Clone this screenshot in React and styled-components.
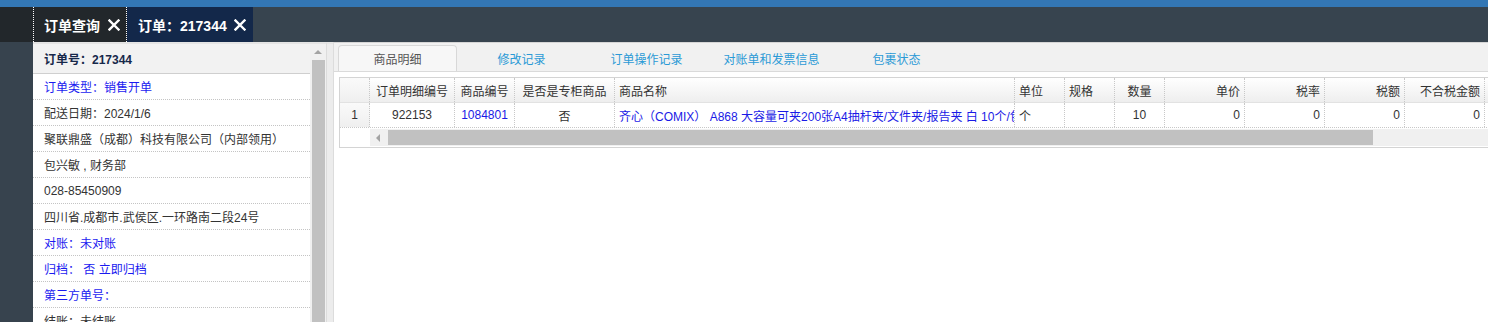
import React from 'react';
import styled, { createGlobalStyle } from 'styled-components';

const GlobalStyle = createGlobalStyle`
    html, body {
        margin: 0;
        padding: 0;
        background: #37434e;
        font-family: "Liberation Sans", "Noto Sans CJK SC", sans-serif;
        font-size: 12px;
        overflow: hidden;
    }
    * { box-sizing: border-box; }
`;

const Page = styled.div`
    width: 1488px;
    height: 322px;
    display: flex;
    flex-direction: column;
    overflow: hidden;
`;

const TopStrip = styled.div`
    height: 7px;
    background: #3377b5;
`;

const HeaderBar = styled.div`
    height: 35px;
    display: flex;
    background: #37444f;
`;

const HomeSlot = styled.div`
    width: 33px;
    background: #22272b;
`;

const PageTab = styled.div`
    display: flex;
    align-items: center;
    gap: ${(p) => p.$gap}px;
    padding: 0 ${(p) => p.$padR}px 0 ${(p) => p.$padL}px;
    background: ${(p) => (p.$active ? '#13284a' : '#22272b')};
    border-left: ${(p) => (p.$dotted ? '1px dotted #fff' : 'none')};
    border-right: ${(p) => (p.$dotted ? '1px dotted #fff' : 'none')};
    color: #fff;
    font-size: 14px;
    font-weight: bold;
`;

const CloseIcon = styled.svg`
    width: 12px;
    height: 12px;
    flex: none;
`;

const Main = styled.div`
    flex: 1;
    display: flex;
    min-height: 0;
`;

const LeftStrip = styled.div`
    width: 33px;
    background: #37434e;
`;

const InfoPanel = styled.div`
    width: 277px;
    background: #fff;
    border-top: 2px solid #e4e4e4;
    overflow: hidden;
`;

const InfoHead = styled.div`
    height: 30px;
    display: flex;
    align-items: center;
    padding-left: 11px;
    background: #f2f2f2;
    border-bottom: 1px solid #cfcfcf;
    color: #17284a;
    font-weight: bold;
`;

const InfoRow = styled.div`
    height: 26px;
    display: flex;
    align-items: center;
    padding-left: 11px;
    border-bottom: 1px dotted #c4c4c4;
    color: ${(p) => (p.$blue ? '#1a1af0' : '#333')};
    white-space: nowrap;
`;

const VScroll = styled.div`
    width: 17px;
    display: flex;
    flex-direction: column;
    align-items: center;
    background: #f0f0f0;
    border-top: 2px solid #e4e4e4;
    border-right: 1px solid #dcdcdc;
`;

const UpArrow = styled.div`
    margin-top: 6px;
    width: 0;
    height: 0;
    border-left: 4px solid transparent;
    border-right: 4px solid transparent;
    border-bottom: 4px solid #a3a3a3;
`;

const VThumb = styled.div`
    margin-top: 6px;
    width: 13px;
    flex: 1;
    background: #c1c1c1;
`;

const Gutter = styled.div`
    width: 6px;
    background: #ececec;
    border-top: 2px solid #e4e4e4;
`;

const RightPanel = styled.div`
    flex: 1;
    display: flex;
    flex-direction: column;
    background: #fff;
    border-top: 1px solid #d6d6d6;
    border-left: 1px solid #dcdcdc;
    min-width: 0;
`;

const TabBar = styled.div`
    height: 29px;
    display: flex;
    align-items: flex-end;
    padding-left: 4px;
    background: #f1f1f1;
    border-bottom: 1px solid #dadada;
`;

const DetailTab = styled.div`
    width: ${(p) => (p.$active ? 119 : 125)}px;
    margin-right: ${(p) => (p.$active ? 2 : 0)}px;
    height: 26px;
    display: flex;
    align-items: center;
    justify-content: center;
    font-size: 12px;
    color: ${(p) => (p.$active ? '#555' : '#2b9ad6')};
    background: ${(p) => (p.$active ? '#f7f7f7' : 'transparent')};
    border: ${(p) => (p.$active ? '1px solid #d8d8d8' : 'none')};
    border-bottom: none;
    border-radius: 4px 4px 0 0;
    white-space: nowrap;
`;

const Content = styled.div`
    flex: 1;
    padding: 5px 0 0 5px;
    overflow: hidden;
`;

const Grid = styled.div`
    width: 1170px;
    border: 1px solid #d4d4d4;
    border-right: none;
`;

const GridRow = styled.div`
    display: flex;
    height: 25px;
    border-bottom: ${(p) => (p.$head ? '1px solid #e2e2e2' : '1px dotted #c8c8c8')};
    background: ${(p) => (p.$head ? 'linear-gradient(#ffffff, #eeeeee)' : '#fff')};
`;

const Cell = styled.div`
    width: ${(p) => p.$w}px;
    flex: none;
    display: flex;
    align-items: center;
    justify-content: ${(p) => (p.$align === 'right' ? 'flex-end' : p.$align === 'left' ? 'flex-start' : 'center')};
    padding: 0 4px;
    border-right: 1px dotted #c8c8c8;
    color: ${(p) => (p.$blue ? '#1a1ae6' : '#333')};
    white-space: nowrap;
    overflow: hidden;
    background: ${(p) => (p.$num ? 'linear-gradient(#fafafa, #efefef)' : 'transparent')};
`;

const HScrollRow = styled.div`
    display: flex;
    height: 19px;
    padding-top: 1px;
`;

const HSpacer = styled.div`
    width: 30px;
`;

const HTrack = styled.div`
    flex: 1;
    display: flex;
    align-items: center;
    background: #f0f0f0;
    height: 17px;
`;

const LeftArrow = styled.div`
    margin-left: 6px;
    width: 0;
    height: 0;
    border-top: 4px solid transparent;
    border-bottom: 4px solid transparent;
    border-right: 4px solid #a3a3a3;
`;

const HThumb = styled.div`
    margin-left: 8px;
    width: 985px;
    height: 15px;
    background: #c1c1c1;
`;

const info = [
    { text: '订单类型：销售开单', blue: true },
    { text: '配送日期：2024/1/6' },
    { text: '聚联鼎盛（成都）科技有限公司（内部领用）' },
    { text: '包兴敏 , 财务部' },
    { text: '028-85450909' },
    { text: '四川省.成都市.武侯区.一环路南二段24号' },
    { text: '对账：未对账', blue: true },
    { text: '归档：  否 立即归档', blue: true },
    { text: '第三方单号：', blue: true },
    { text: '结账：未结账' },
];

const tabs = ['修改记录', '订单操作记录', '对账单和发票信息', '包裹状态'];

const columns = [
    { key: 'n', title: '', w: 30, num: true },
    { key: 'id', title: '订单明细编号', w: 85 },
    { key: 'code', title: '商品编号', w: 60, blue: true },
    { key: 'zg', title: '是否是专柜商品', w: 100 },
    { key: 'name', title: '商品名称', w: 400, align: 'left', blue: true },
    { key: 'unit', title: '单位', w: 50, align: 'left' },
    { key: 'spec', title: '规格', w: 50, align: 'left' },
    { key: 'qty', title: '数量', w: 50 },
    { key: 'price', title: '单价', w: 80, align: 'right' },
    { key: 'rate', title: '税率', w: 80, align: 'right' },
    { key: 'tax', title: '税额', w: 80, align: 'right' },
    { key: 'net', title: '不合税金额', w: 80, align: 'right' },
];

const row = {
    n: '1',
    id: '922153',
    code: '1084801',
    zg: '否',
    name: '齐心（COMIX） A868 大容量可夹200张A4抽杆夹/文件夹/报告夹 白 10个/包',
    unit: '个',
    spec: '',
    qty: '10',
    price: '0',
    rate: '0',
    tax: '0',
    net: '0',
};

const Close = () => (
    <CloseIcon viewBox="0 0 12 12">
        <path d="M1.5 1.5 L10.5 10.5 M10.5 1.5 L1.5 10.5" stroke="#fff" strokeWidth="2.4" strokeLinecap="square" />
    </CloseIcon>
);

export default function App() {
    return (
        <Page>
            <GlobalStyle />
            <TopStrip />
            <HeaderBar>
                <HomeSlot />
                <PageTab $dotted $gap={8} $padL={10} $padR={6}>
                    订单查询 <Close />
                </PageTab>
                <PageTab $active $gap={7} $padL={11} $padR={7}>
                    订单：217344 <Close />
                </PageTab>
            </HeaderBar>
            <Main>
                <LeftStrip />
                <InfoPanel>
                    <InfoHead>订单号：217344</InfoHead>
                    {info.map((item, i) => (
                        <InfoRow key={i} $blue={item.blue}>{item.text}</InfoRow>
                    ))}
                </InfoPanel>
                <VScroll>
                    <UpArrow />
                    <VThumb />
                </VScroll>
                <Gutter />
                <RightPanel>
                    <TabBar>
                        <DetailTab $active>商品明细</DetailTab>
                        {tabs.map((t) => (
                            <DetailTab key={t}>{t}</DetailTab>
                        ))}
                    </TabBar>
                    <Content>
                        <Grid>
                            <GridRow $head>
                                {columns.map((c) => (
                                    <Cell key={c.key} $w={c.w} $num={c.num} $align={c.align}>{c.title}</Cell>
                                ))}
                            </GridRow>
                            <GridRow>
                                {columns.map((c) => (
                                    <Cell key={c.key} $w={c.w} $num={c.num} $align={c.align} $blue={c.blue}>
                                        {row[c.key]}
                                    </Cell>
                                ))}
                            </GridRow>
                            <HScrollRow>
                                <HSpacer />
                                <HTrack>
                                    <LeftArrow />
                                    <HThumb />
                                </HTrack>
                            </HScrollRow>
                        </Grid>
                    </Content>
                </RightPanel>
            </Main>
        </Page>
    );
}
